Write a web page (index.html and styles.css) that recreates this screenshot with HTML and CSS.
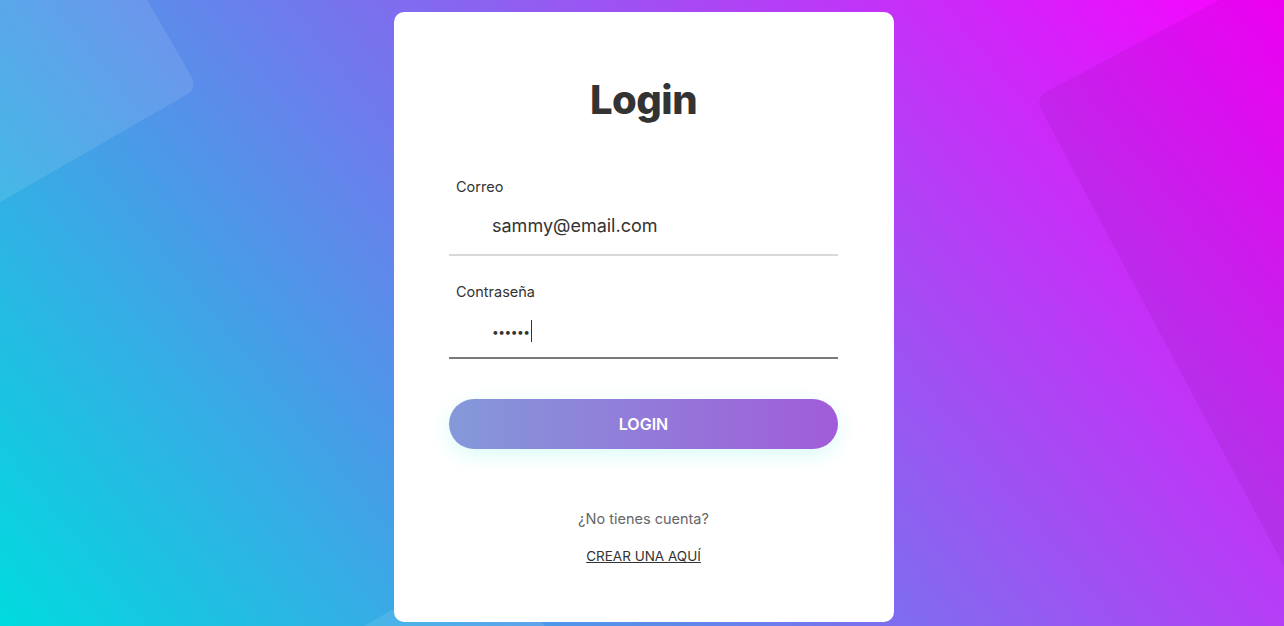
FILE: index.html
```html
<!DOCTYPE html>
<html lang="es">
  <head>
    <meta charset="UTF-8" />
    <meta name="viewport" content="width=device-width, initial-scale=1.0" />
    <title>Login</title>
    <link rel="stylesheet" href="styles.css">
  </head>
  <body>
    <!-- formas del fondo -->
    <svg class="bg" width="1284" height="626" viewBox="0 0 1284 626">
      <rect x="-302" y="-312" width="500" height="400" rx="12" fill="rgba(255,255,255,0.1)" transform="rotate(-30 198 88)" />
      <rect x="1035" y="98" width="700" height="900" rx="12" fill="rgba(40,0,60,0.07)" transform="rotate(-28 1035 98)" />
      <rect x="340" y="640" width="184" height="300" rx="12" fill="rgba(255,255,255,0.1)" transform="rotate(-30 340 640)" />
    </svg>

    <div class="page">
      <form class="card">
        <h1 class="title">Login</h1>

        <div class="field">
          <label for="correo">Correo</label>
          <input id="correo" type="text" value="sammy@email.com" />
        </div>

        <div class="field focused">
          <label for="pass">Contraseña</label>
          <div class="pass-line">
            <span class="dots">••••••</span><span class="caret"></span>
          </div>
        </div>

        <button type="button" class="btn">LOGIN</button>

        <p class="ask">¿No tienes cuenta?</p>
        <a class="create" href="#">CREAR UNA AQUÍ</a>
      </form>
    </div>
  </body>
</html>
```

FILE: styles.css
```css
* {
  box-sizing: border-box;
}
body {
  margin: 0;
  height: 626px;
  overflow: hidden;
  position: relative;
  font-family: Inter, "Noto Sans", sans-serif;
  background: linear-gradient(51deg, #00dbde 0%, #fc00ff 100%);
}
.bg {
  position: absolute;
  left: 0;
  top: 0;
  display: block;
}

.page {
  position: relative;
  display: flex;
  justify-content: center;
  padding: 12px 0 0 4px;
}
.card {
  width: 500px;
  height: 610px;
  background: #fff;
  border-radius: 10px;
  padding: 0 56px 0 55px;
  display: flex;
  flex-direction: column;
}
.title {
  margin: 64px 0 0;
  text-align: center;
  font-size: 40px;
  font-weight: 800;
  line-height: 48px;
  color: #333;
  letter-spacing: -0.5px;
}

.field {
  border-bottom: 2px solid #d9d9d9;
}
.field:first-of-type {
  margin-top: 53px;
}
.field + .field {
  margin-top: 26px;
}
.field.focused {
  border-bottom-color: #7a7a7a;
}
.field label {
  display: block;
  padding-left: 7px;
  font-size: 14.5px;
  line-height: 20px;
  color: #333;
}
.field input {
  display: block;
  width: 100%;
  border: none;
  outline: none;
  padding: 17px 43px 16px;
  font-family: inherit;
  font-size: 18px;
  line-height: 24px;
  color: #333;
  background: transparent;
}
.pass-line {
  display: flex;
  align-items: center;
  height: 55px;
  padding: 3px 0 0 43px;
}
.dots {
  font-size: 12px;
  letter-spacing: -0.5px;
  color: #333;
}
.caret {
  width: 1px;
  height: 22px;
  background: #333;
  margin-left: 1px;
}

.btn {
  margin-top: 40px;
  height: 50px;
  border: none;
  border-radius: 25px;
  background: linear-gradient(90deg, #8499d9 0%, #a15cd9 100%);
  color: #fff;
  font-family: inherit;
  font-size: 16px;
  font-weight: 600;
  box-shadow: 0 6px 20px rgba(0, 219, 222, 0.15);
}

.ask {
  margin: 60px 0 0;
  text-align: center;
  font-size: 14.5px;
  line-height: 20px;
  color: #666;
}
.create {
  margin-top: 17px;
  align-self: center;
  font-size: 13.5px;
  line-height: 20px;
  color: #333;
}
```
